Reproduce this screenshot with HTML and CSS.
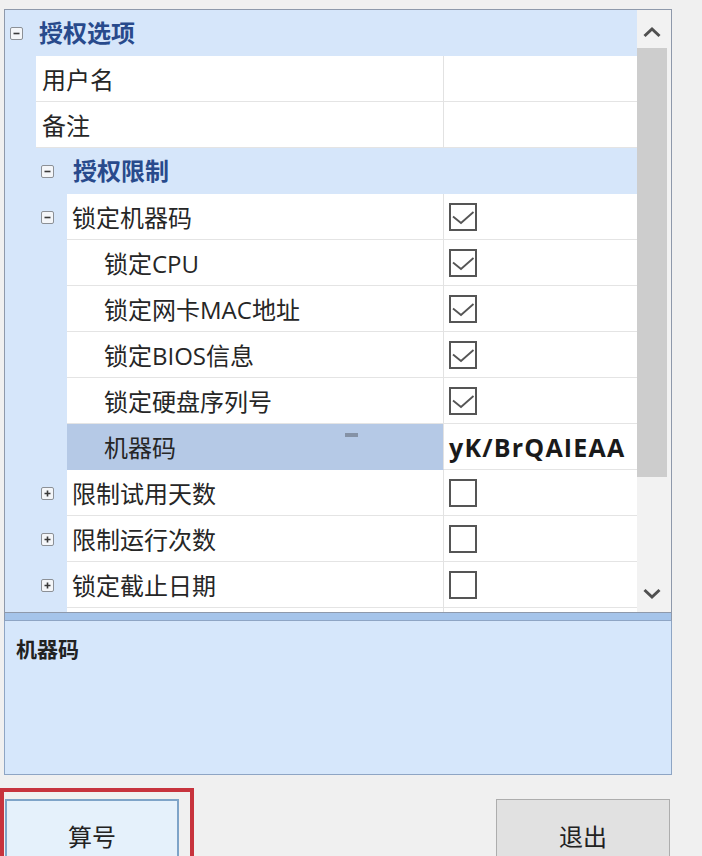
FILE: index.html
```html
<!DOCTYPE html>
<html lang="zh-CN">
<head>
<meta charset="utf-8">
<title>授权选项</title>
<link rel="stylesheet" href="styles.css">
</head>
<body>
<div class="window">
  <div class="grid">
    <div class="rows">
      <div class="row cat l0">
        <span class="exp"><svg viewBox="0 0 13 13" width="13" height="13"><rect x="0.5" y="0.5" width="12" height="12" rx="1.5" fill="#f4f6f9" stroke="#8c9096"/><path d="M3.5 6.5h6" stroke="#3a3a3a" stroke-width="1.6"/></svg></span>
        <span class="cat-label">授权选项</span>
      </div>
      <div class="row">
        <span class="gutter g0"></span><span class="name p0">用户名</span><span class="value"></span>
      </div>
      <div class="row">
        <span class="gutter g0"></span><span class="name p0">备注</span><span class="value"></span>
      </div>
      <div class="row cat l1">
        <span class="exp"><svg viewBox="0 0 13 13" width="13" height="13"><rect x="0.5" y="0.5" width="12" height="12" rx="1.5" fill="#f4f6f9" stroke="#8c9096"/><path d="M3.5 6.5h6" stroke="#3a3a3a" stroke-width="1.6"/></svg></span>
        <span class="cat-label">授权限制</span>
      </div>
      <div class="row">
        <span class="gutter g1"><span class="exp"><svg viewBox="0 0 13 13" width="13" height="13"><rect x="0.5" y="0.5" width="12" height="12" rx="1.5" fill="#f4f6f9" stroke="#8c9096"/><path d="M3.5 6.5h6" stroke="#3a3a3a" stroke-width="1.6"/></svg></span></span><span class="name p1">锁定机器码</span>
        <span class="value"><span class="cb"><svg viewBox="0 0 28 28" width="28" height="28"><rect x="1" y="1" width="26" height="26" fill="#fff" stroke="#555" stroke-width="2"/><path d="M4 13.5l8 6.5 12.5-11" fill="none" stroke="#555" stroke-width="1.8"/></svg></span></span>
      </div>
      <div class="row">
        <span class="gutter g1"></span><span class="name p2">锁定CPU</span>
        <span class="value"><span class="cb"><svg viewBox="0 0 28 28" width="28" height="28"><rect x="1" y="1" width="26" height="26" fill="#fff" stroke="#555" stroke-width="2"/><path d="M4 13.5l8 6.5 12.5-11" fill="none" stroke="#555" stroke-width="1.8"/></svg></span></span>
      </div>
      <div class="row">
        <span class="gutter g1"></span><span class="name p2">锁定网卡MAC地址</span>
        <span class="value"><span class="cb"><svg viewBox="0 0 28 28" width="28" height="28"><rect x="1" y="1" width="26" height="26" fill="#fff" stroke="#555" stroke-width="2"/><path d="M4 13.5l8 6.5 12.5-11" fill="none" stroke="#555" stroke-width="1.8"/></svg></span></span>
      </div>
      <div class="row">
        <span class="gutter g1"></span><span class="name p2">锁定BIOS信息</span>
        <span class="value"><span class="cb"><svg viewBox="0 0 28 28" width="28" height="28"><rect x="1" y="1" width="26" height="26" fill="#fff" stroke="#555" stroke-width="2"/><path d="M4 13.5l8 6.5 12.5-11" fill="none" stroke="#555" stroke-width="1.8"/></svg></span></span>
      </div>
      <div class="row">
        <span class="gutter g1"></span><span class="name p2">锁定硬盘序列号</span>
        <span class="value"><span class="cb"><svg viewBox="0 0 28 28" width="28" height="28"><rect x="1" y="1" width="26" height="26" fill="#fff" stroke="#555" stroke-width="2"/><path d="M4 13.5l8 6.5 12.5-11" fill="none" stroke="#555" stroke-width="1.8"/></svg></span></span>
      </div>
      <div class="row">
        <span class="gutter g1"></span><span class="name p2 selected">机器码<span class="dash"></span></span>
        <span class="value code">yK/BrQAIEAA</span>
      </div>
      <div class="row">
        <span class="gutter g1"><span class="exp"><svg viewBox="0 0 13 13" width="13" height="13"><rect x="0.5" y="0.5" width="12" height="12" rx="1.5" fill="#f4f6f9" stroke="#8c9096"/><path d="M3.5 6.5h6M6.5 3.5v6" stroke="#3a3a3a" stroke-width="1.6"/></svg></span></span><span class="name p1">限制试用天数</span>
        <span class="value"><span class="cb"><svg viewBox="0 0 28 28" width="28" height="28"><rect x="1" y="1" width="26" height="26" fill="#fff" stroke="#555" stroke-width="2"/></svg></span></span>
      </div>
      <div class="row">
        <span class="gutter g1"><span class="exp"><svg viewBox="0 0 13 13" width="13" height="13"><rect x="0.5" y="0.5" width="12" height="12" rx="1.5" fill="#f4f6f9" stroke="#8c9096"/><path d="M3.5 6.5h6M6.5 3.5v6" stroke="#3a3a3a" stroke-width="1.6"/></svg></span></span><span class="name p1">限制运行次数</span>
        <span class="value"><span class="cb"><svg viewBox="0 0 28 28" width="28" height="28"><rect x="1" y="1" width="26" height="26" fill="#fff" stroke="#555" stroke-width="2"/></svg></span></span>
      </div>
      <div class="row">
        <span class="gutter g1"><span class="exp"><svg viewBox="0 0 13 13" width="13" height="13"><rect x="0.5" y="0.5" width="12" height="12" rx="1.5" fill="#f4f6f9" stroke="#8c9096"/><path d="M3.5 6.5h6M6.5 3.5v6" stroke="#3a3a3a" stroke-width="1.6"/></svg></span></span><span class="name p1">锁定截止日期</span>
        <span class="value"><span class="cb"><svg viewBox="0 0 28 28" width="28" height="28"><rect x="1" y="1" width="26" height="26" fill="#fff" stroke="#555" stroke-width="2"/></svg></span></span>
      </div>
      <div class="row">
        <span class="gutter g1"></span><span class="name p1"></span><span class="value"></span>
      </div>
    </div>
    <div class="scrollbar">
      <div class="arrow up"><svg viewBox="0 0 20 12" width="20" height="12"><path d="M2.5 10L10 3l7.5 7" fill="none" stroke="#505050" stroke-width="3"/></svg></div>
      <div class="thumb"></div>
      <div class="track"></div>
      <div class="arrow down"><svg viewBox="0 0 20 12" width="20" height="12"><path d="M2.5 2L10 9l7.5-7" fill="none" stroke="#505050" stroke-width="3"/></svg></div>
    </div>
  </div>
  <div class="splitter"></div>
  <div class="desc">
    <div class="desc-title">机器码</div>
  </div>
  <div class="buttons">
    <div class="highlight">
      <button class="btn primary">算号</button>
    </div>
    <button class="btn">退出</button>
  </div>
</div>
</body>
</html>
```
FILE: styles.css
```css
html, body {
  margin: 0;
  padding: 0;
  background: #f0f0f0;
  overflow: hidden;
}
body {
  font-family: "Open Sans", "Noto Sans CJK SC", sans-serif;
  color: #262626;
}
.window {
  padding: 9px 30px 0 4px;
  width: 668px;
}
.grid {
  display: flex;
  height: 602px;
  border: 1px solid #8e99ab;
  background: #fff;
}
.rows {
  width: 632px;
  height: 602px;
  overflow: hidden;
  display: flex;
  flex-direction: column;
}
.row {
  display: flex;
  height: 46px;
  flex: none;
  align-items: stretch;
  font-size: 24px;
}
.row.cat {
  background: #d6e6fa;
  align-items: center;
}
.row.cat.l0 { padding-left: 5px; }
.row.cat.l1 { padding-left: 36px; }
.cat-label {
  font-weight: bold;
  color: #284a8c;
  margin-left: 16px;
  line-height: 1;
}
.row.cat.l1 .cat-label { margin-left: 19px; }
.exp {
  display: block;
  width: 13px;
  height: 13px;
}
.exp svg { display: block; }
.gutter {
  background: #d6e6fa;
  flex: none;
  display: flex;
  align-items: center;
}
.g0 { width: 31px; }
.g1 { width: 62px; padding-left: 36px; box-sizing: border-box; }
.name {
  flex: 1;
  display: flex;
  align-items: center;
  border-right: 1px solid #e2e2e2;
  border-bottom: 1px solid #e4e4e4;
  position: relative;
  white-space: nowrap;
}
.p0 { padding-left: 6px; }
.p1 { padding-left: 5px; }
.p2 { padding-left: 37px; }
.name.selected {
  background: #b5c9e6;
  border-bottom-color: #b5c9e6;
}
.dash {
  position: absolute;
  left: 278px;
  top: 9px;
  width: 13px;
  height: 4px;
  background: #8592a6;
}
.value {
  width: 193px;
  flex: none;
  display: flex;
  align-items: center;
  padding-left: 5px;
  box-sizing: border-box;
  border-bottom: 1px solid #e4e4e4;
  overflow: hidden;
  white-space: nowrap;
}
.cb { display: block; width: 28px; height: 28px; }
.cb svg { display: block; }
.value.code {
  font-weight: bold;
  font-size: 25px;
  color: #1a1a1a;
  letter-spacing: 1.2px;
}
.scrollbar {
  width: 34px;
  flex: none;
  display: flex;
  flex-direction: column;
  background: #f2f2f2;
}
.arrow {
  flex: none;
  width: 30px;
  height: 38px;
  display: flex;
  justify-content: center;
}
.arrow.up { align-items: flex-start; padding-top: 16px; box-sizing: border-box; }
.arrow.down { align-items: flex-start; padding-top: 14px; box-sizing: border-box; }
.thumb {
  flex: none;
  width: 30px;
  height: 429px;
  background: #cdcdcd;
}
.track { flex: 1; width: 30px; }
.splitter {
  height: 7px;
  background: #a5c4ea;
  border-left: 1px solid #8e99ab;
  border-right: 1px solid #8e99ab;
  border-bottom: 1px solid #8ea5c4;
}
.desc {
  height: 154px;
  border: 1px solid #8ea5c4;
  border-top: none;
  background: #d6e7fb;
  box-sizing: border-box;
  padding: 16px 0 0 11px;
}
.desc-title {
  font-weight: bold;
  font-size: 21px;
  color: #222;
  line-height: 1.2;
}
.buttons {
  display: flex;
  justify-content: space-between;
  align-items: flex-start;
  margin-left: -4px;
  margin-top: 13px;
}
.highlight {
  border: 4px solid #c7333d;
  padding: 7px 11px 0 1px;
  height: 80px;
  box-sizing: border-box;
}
.btn {
  font-family: "Open Sans", "Noto Sans CJK SC", sans-serif;
  font-size: 24px;
  color: #222;
  width: 174px;
  height: 66px;
  background: #e1e1e1;
  border: 1px solid #adadad;
  margin: 11px 2px 0 0;
  padding: 6px 0 0 0;
}
.btn.primary {
  background: #e5f1fb;
  border: 2px solid #7ea4c8;
  margin: 0;
}
```
